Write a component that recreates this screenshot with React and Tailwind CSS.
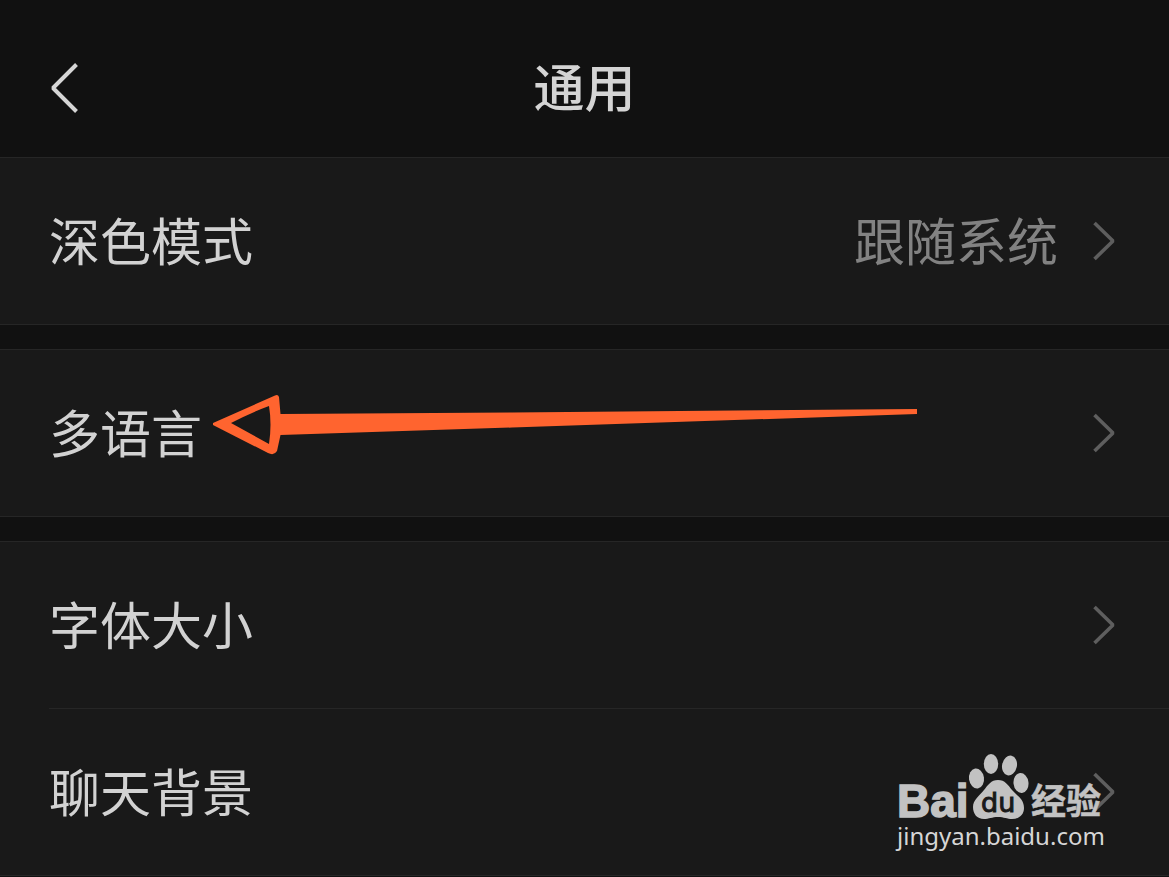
function Chevron() {
  return (
    <svg width="24" height="42" viewBox="0 0 24 42" fill="none" className="shrink-0" aria-hidden="true">
      <path d="M2.500 3 L21 21 L2.500 39" stroke="#5e5e5e" strokeWidth="3.600" strokeLinejoin="bevel" />
    </svg>
  );
}

function Row({ label, value, children }) {
  return (
    <li className="relative">
      <button type="button" className="flex h-[166px] w-full items-center pr-[53px] pl-[49px] text-left">
        <span className="flex-1 pt-1.5 text-[#d2d2d2]">{label}</span>
        {value && <span className="mr-[34px] pt-1.5 text-[#828282]">{value}</span>}
        <Chevron />
      </button>
      {children}
    </li>
  );
}

function Group({ children }) {
  return <ul className="border-y border-[#262626] bg-[#191919]">{children}</ul>;
}

function Arrow() {
  return (
    <svg
      width="706"
      height="62"
      viewBox="0 0 706 62"
      className="pointer-events-none absolute top-[44px] left-[212px]"
      aria-hidden="true"
    >
      <path
        fill="#ff642f"
        fillRule="evenodd"
        d="M1 29 L63 1.500 Q66 0 67 3 L68.500 20 L300 18.500 L705 15 V20 L300 33.500 L68.500 41 L65 57 Q62 62 56 59 L1 31 Z M19 29 L57 50 Q60 30 57 12 Q38 19 19 29 Z"
      />
    </svg>
  );
}

function Watermark() {
  return (
    <div className="pointer-events-none absolute right-[62px] bottom-[25px] w-[210px]">
      <svg width="210" height="68" viewBox="0 0 210 68" className="block overflow-visible" aria-label="Baidu 经验">
        <g fill="#c2c2c2" stroke="#c2c2c2">
          <text x="0" y="64" strokeWidth="1.500" className="font-['Liberation_Sans',sans-serif] text-[46px] leading-none font-bold">
            Bai
          </text>
          <text
            x="134"
            y="61"
            strokeWidth="0.500"
            className="font-['Noto_Sans_CJK_SC',sans-serif] text-[35px] leading-none font-bold"
          >
            经验
          </text>
        </g>
        <g fill="#c2c2c2">
          <ellipse cx="79.500" cy="25.500" rx="7.500" ry="10" transform="rotate(-8 79.500 25.500)" />
          <ellipse cx="94" cy="11" rx="7.200" ry="10" />
          <ellipse cx="112.500" cy="12.500" rx="7.400" ry="10" transform="rotate(12 112.500 12.500)" />
          <ellipse cx="124" cy="30" rx="7.500" ry="10" transform="rotate(-6 124 30)" />
          <path d="M101 27 C108 27 111 32 115 37 C120 43 127 46 127 55 C127 62 122 66 115 66 C110 66 107 64 101 64 C95 64 92 66 87 66 C80 66 76 61 76 54 C76 47 82 43 87 37 C91 32 94 27 101 27 Z" />
        </g>
        <text
          x="84"
          y="59"
          fill="#191919"
          stroke="#191919"
          strokeWidth="1"
          className="font-['DejaVu_Sans',sans-serif] text-[27px] leading-none"
        >
          du
        </text>
      </svg>
      <p className="pt-px font-['Noto_Sans',sans-serif] text-[24px] leading-[28px] font-normal text-[#d6d6d6]">
        jingyan.baidu.com
      </p>
    </div>
  );
}

export default function App() {
  return (
    <div className="min-h-screen overflow-hidden bg-[#111111] font-['Liberation_Sans','Noto_Sans_CJK_SC',sans-serif] text-[51px] leading-[76px]">
      <header className="grid h-[157px] grid-cols-[1fr_auto_1fr] items-center px-[49px] pt-[18px]">
        <button type="button" aria-label="返回" className="justify-self-start">
          <svg width="30" height="52" viewBox="0 0 30 52" fill="none" className="block">
            <path d="M27.500 2.500 L4 26 L27.500 49.500" stroke="#d6d6d6" strokeWidth="4" strokeLinejoin="bevel" />
          </svg>
        </button>
        <h1 className="pt-1 font-medium text-[#d4d4d4]">通用</h1>
      </header>

      <main className="flex flex-col gap-6">
        <Group>
          <Row label="深色模式" value="跟随系统" />
        </Group>
        <Group>
          <Row label="多语言">
            <Arrow />
          </Row>
        </Group>
        <Group>
          <Row label="字体大小" />
          <li className="ml-[49px] h-px bg-[#262626]" aria-hidden="true" />
          <Row label="聊天背景">
            <Watermark />
          </Row>
        </Group>
      </main>
    </div>
  );
}
